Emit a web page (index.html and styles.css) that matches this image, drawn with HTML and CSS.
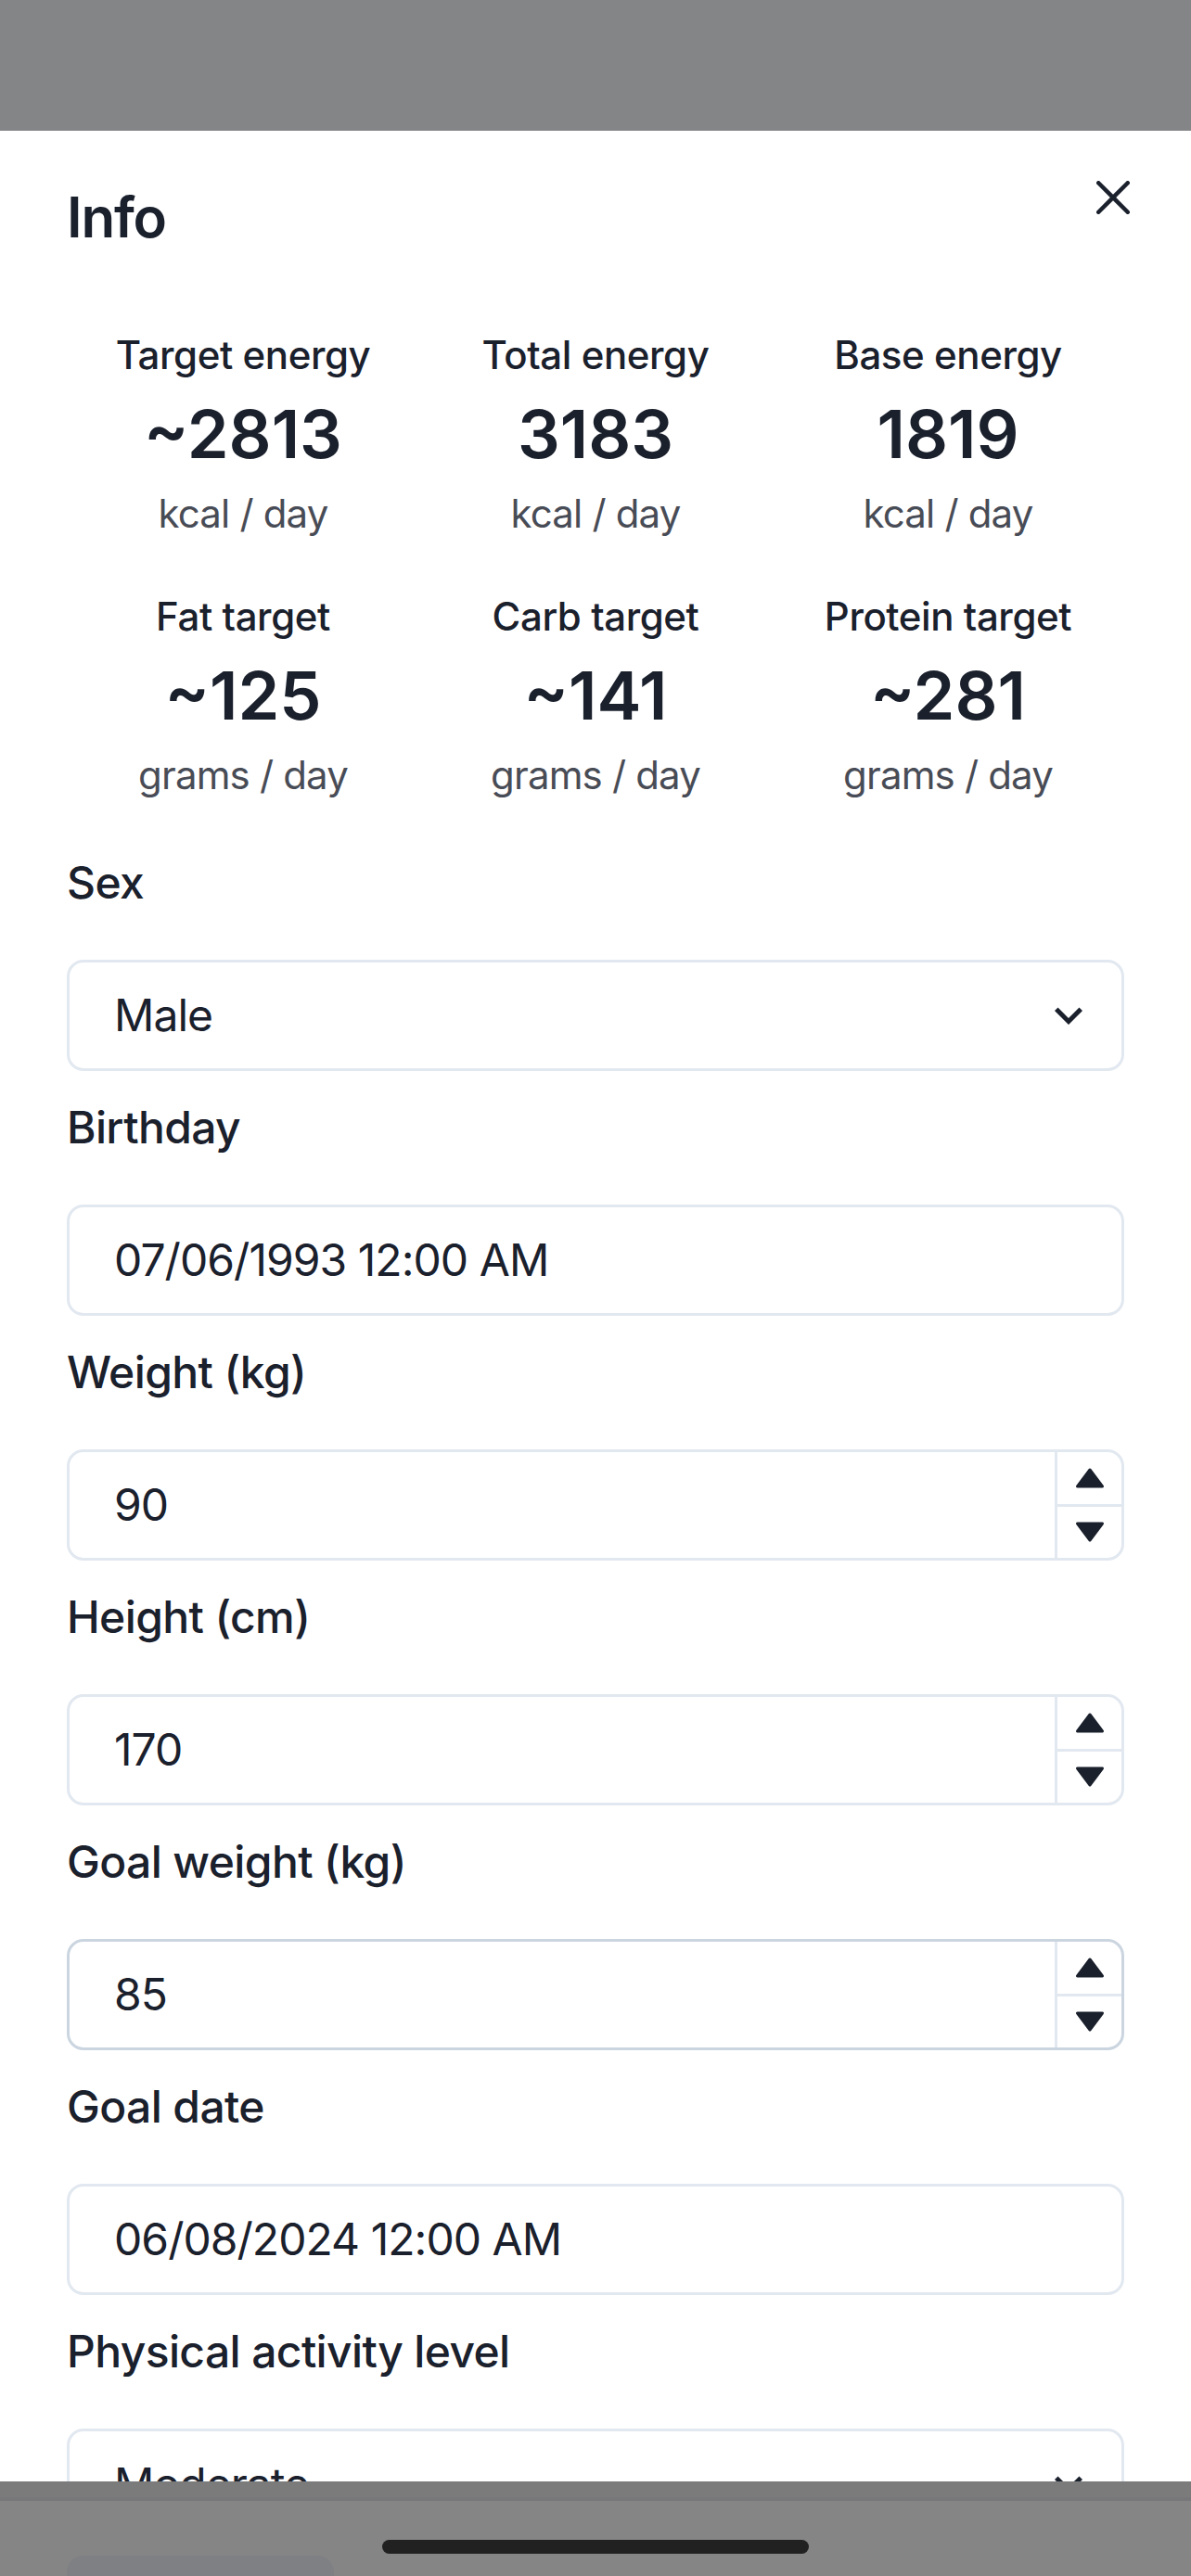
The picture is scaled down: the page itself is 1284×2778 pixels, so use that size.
FILE: index.html
```html
<!DOCTYPE html>
<html lang="en">
<head>
<meta charset="utf-8">
<title>Info</title>
<link rel="stylesheet" href="styles.css">
</head>
<body>
<div class="screen">
  <div class="backdrop"></div>
  <section class="sheet">
    <header class="sheet-header">
      <h2 class="sheet-title">Info</h2>
      <button class="close-btn" aria-label="Close">
        <svg viewBox="0 0 24 24" width="36" height="36"><path fill="currentColor" d="M.439,21.44a1.5,1.5,0,0,0,2.122,2.121L11.823,14.3a.25.25,0,0,1,.354,0l9.262,9.263a1.5,1.5,0,1,0,2.122-2.121L14.3,12.177a.25.25,0,0,1,0-.354l9.263-9.262A1.5,1.5,0,0,0,21.439.44L12.177,9.7a.25.25,0,0,1-.354,0L2.561.44A1.5,1.5,0,0,0,.439,2.561L9.7,11.823a.25.25,0,0,1,0,.354Z"/></svg>
      </button>
    </header>
    <div class="sheet-body">
      <dl class="stats">
        <div class="stat"><dt class="stat-label">Target energy</dt><dd class="stat-number">~2813</dd><dd class="stat-help">kcal / day</dd></div>
        <div class="stat"><dt class="stat-label">Total energy</dt><dd class="stat-number">3183</dd><dd class="stat-help">kcal / day</dd></div>
        <div class="stat"><dt class="stat-label">Base energy</dt><dd class="stat-number">1819</dd><dd class="stat-help">kcal / day</dd></div>
        <div class="stat"><dt class="stat-label">Fat target</dt><dd class="stat-number">~125</dd><dd class="stat-help">grams / day</dd></div>
        <div class="stat"><dt class="stat-label">Carb target</dt><dd class="stat-number">~141</dd><dd class="stat-help">grams / day</dd></div>
        <div class="stat"><dt class="stat-label">Protein target</dt><dd class="stat-number">~281</dd><dd class="stat-help">grams / day</dd></div>
      </dl>

      <div class="fields">
        <div class="field">
          <label class="field-label">Sex</label>
          <div class="control select">
            <span class="control-value">Male</span>
            <svg class="chevron" viewBox="0 0 24 24" width="60" height="60"><path fill="currentColor" d="M16.59 8.59L12 13.17 7.41 8.59 6 10l6 6 6-6z"/></svg>
          </div>
        </div>

        <div class="field">
          <label class="field-label">Birthday</label>
          <div class="control"><span class="control-value">07/06/1993 12:00 AM</span></div>
        </div>

        <div class="field">
          <label class="field-label">Weight (kg)</label>
          <div class="control number">
            <span class="control-value">90</span>
            <div class="stepper">
              <div class="step"><svg viewBox="0 0 24 24" width="36" height="36"><path fill="currentColor" d="M12.8,5.4c-0.377-0.504-1.223-0.504-1.6,0l-9,12c-0.228,0.303-0.264,0.708-0.095,1.047C2.275,18.786,2.621,19,3,19h18c0.379,0,0.725-0.214,0.895-0.553c0.169-0.339,0.133-0.744-0.095-1.047L12.8,5.4z"/></svg></div>
              <div class="step step-down"><svg viewBox="0 0 24 24" width="36" height="36"><path fill="currentColor" d="M21,5H3C2.621,5,2.275,5.214,2.105,5.553C1.937,5.892,1.973,6.297,2.2,6.6l9,12c0.188,0.252,0.485,0.4,0.8,0.4s0.611-0.148,0.8-0.4l9-12c0.228-0.303,0.264-0.708,0.095-1.047C21.725,5.214,21.379,5,21,5z"/></svg></div>
            </div>
          </div>
        </div>

        <div class="field">
          <label class="field-label">Height (cm)</label>
          <div class="control number">
            <span class="control-value">170</span>
            <div class="stepper">
              <div class="step"><svg viewBox="0 0 24 24" width="36" height="36"><path fill="currentColor" d="M12.8,5.4c-0.377-0.504-1.223-0.504-1.6,0l-9,12c-0.228,0.303-0.264,0.708-0.095,1.047C2.275,18.786,2.621,19,3,19h18c0.379,0,0.725-0.214,0.895-0.553c0.169-0.339,0.133-0.744-0.095-1.047L12.8,5.4z"/></svg></div>
              <div class="step step-down"><svg viewBox="0 0 24 24" width="36" height="36"><path fill="currentColor" d="M21,5H3C2.621,5,2.275,5.214,2.105,5.553C1.937,5.892,1.973,6.297,2.2,6.6l9,12c0.188,0.252,0.485,0.4,0.8,0.4s0.611-0.148,0.8-0.4l9-12c0.228-0.303,0.264-0.708,0.095-1.047C21.725,5.214,21.379,5,21,5z"/></svg></div>
            </div>
          </div>
        </div>

        <div class="field">
          <label class="field-label">Goal weight (kg)</label>
          <div class="control number hovered">
            <span class="control-value">85</span>
            <div class="stepper">
              <div class="step"><svg viewBox="0 0 24 24" width="36" height="36"><path fill="currentColor" d="M12.8,5.4c-0.377-0.504-1.223-0.504-1.6,0l-9,12c-0.228,0.303-0.264,0.708-0.095,1.047C2.275,18.786,2.621,19,3,19h18c0.379,0,0.725-0.214,0.895-0.553c0.169-0.339,0.133-0.744-0.095-1.047L12.8,5.4z"/></svg></div>
              <div class="step step-down"><svg viewBox="0 0 24 24" width="36" height="36"><path fill="currentColor" d="M21,5H3C2.621,5,2.275,5.214,2.105,5.553C1.937,5.892,1.973,6.297,2.2,6.6l9,12c0.188,0.252,0.485,0.4,0.8,0.4s0.611-0.148,0.8-0.4l9-12c0.228-0.303,0.264-0.708,0.095-1.047C21.725,5.214,21.379,5,21,5z"/></svg></div>
            </div>
          </div>
        </div>

        <div class="field">
          <label class="field-label">Goal date</label>
          <div class="control"><span class="control-value">06/08/2024 12:00 AM</span></div>
        </div>

        <div class="field">
          <label class="field-label">Physical activity level</label>
          <div class="control select">
            <span class="control-value">Moderate</span>
            <svg class="chevron" viewBox="0 0 24 24" width="60" height="60"><path fill="currentColor" d="M16.59 8.59L12 13.17 7.41 8.59 6 10l6 6 6-6z"/></svg>
          </div>
        </div>
      </div>
    </div>
  </section>
  <div class="system-bar">
    <div class="bar-band"></div>
    <div class="bar-line"></div>
    <div class="bar-main">
      <div class="home-indicator"></div>
      <div class="ghost-button"></div>
    </div>
  </div>
</div>
</body>
</html>
```

FILE: styles.css
```css
* { box-sizing: border-box; }

html, body {
  margin: 0;
  padding: 0;
}

body {
  width: 1284px;
  height: 2778px;
  overflow: hidden;
  background: #848587;
  font-family: "Inter", "Noto Sans", sans-serif;
  color: #1a202c;
}

.screen {
  width: 1284px;
  height: 2778px;
  display: flex;
  flex-direction: column;
}

.backdrop {
  height: 141px;
  flex: none;
  background: #848587;
}

.sheet {
  position: relative;
  height: 2535px;
  flex: none;
  overflow: hidden;
  background: #ffffff;
}

.sheet-header {
  padding: 48px 72px;
}

.sheet-title {
  margin: 0;
  font-size: 60px;
  line-height: 90px;
  font-weight: 600;
  letter-spacing: -0.02em;
  color: #1a202c;
}

.close-btn {
  position: absolute;
  top: 24px;
  right: 36px;
  width: 96px;
  height: 96px;
  border: 0;
  padding: 0;
  background: transparent;
  color: #1a202c;
  display: flex;
  align-items: center;
  justify-content: center;
}

.close-btn svg { display: block; }

.sheet-body {
  padding: 24px 72px 0;
}

.stats {
  margin: 0;
  display: grid;
  grid-template-columns: repeat(3, 1fr);
  row-gap: 24px;
}

.stat {
  text-align: center;
}

.stat-label {
  font-size: 42px;
  line-height: 63px;
  font-weight: 500;
  letter-spacing: -0.01em;
}

.stat-number {
  margin: 0;
  font-size: 72px;
  line-height: 108px;
  font-weight: 600;
}

.stat-help {
  margin: 0 0 24px;
  font-size: 42px;
  line-height: 63px;
  font-weight: 400;
  letter-spacing: -0.02em;
  opacity: 0.8;
}

.fields {
  margin-top: 25px;
}

.field-label {
  display: block;
  font-size: 48px;
  line-height: 72px;
  font-weight: 500;
  letter-spacing: -0.013em;
  margin-bottom: 47px;
}

.control {
  height: 120px;
  margin-bottom: 25px;
  border: 3px solid #e2e8f0;
  border-radius: 18px;
  padding: 0 48px;
  display: flex;
  align-items: center;
  font-size: 48px;
  line-height: 72px;
  letter-spacing: -0.02em;
  color: #1a202c;
  overflow: hidden;
}

.control.hovered {
  border-color: #cbd5e0;
}

.control-value {
  flex: 1;
  white-space: nowrap;
}

.select {
  padding-right: 27px;
}

.chevron {
  display: block;
  flex: none;
  color: #1a202c;
}

.number {
  padding-right: 0;
  align-items: stretch;
}

.number .control-value {
  display: flex;
  align-items: center;
}

.stepper {
  width: 72px;
  flex: none;
  border-left: 3px solid #e2e8f0;
  display: flex;
  flex-direction: column;
}

.step {
  flex: 1;
  display: flex;
  align-items: center;
  justify-content: center;
  color: #1a202c;
}

.step-down {
  border-top: 3px solid #e2e8f0;
}

.step svg { display: block; }

.system-bar {
  flex: 1;
  display: flex;
  flex-direction: column;
  background: #858585;
}

.bar-band {
  height: 17px;
  background: #7b7b7b;
}

.bar-line {
  height: 4px;
  background: #77777a;
}

.bar-main {
  flex: 1;
  display: flex;
  flex-direction: column;
  padding-top: 42px;
}

.home-indicator {
  width: 460px;
  height: 15px;
  margin: 0 auto;
  border-radius: 8px;
  background: #212121;
}

.ghost-button {
  margin-top: 2px;
  margin-left: 72px;
  width: 288px;
  flex: 1;
  border-radius: 18px 18px 0 0;
  background: #7f8084;
}
```
